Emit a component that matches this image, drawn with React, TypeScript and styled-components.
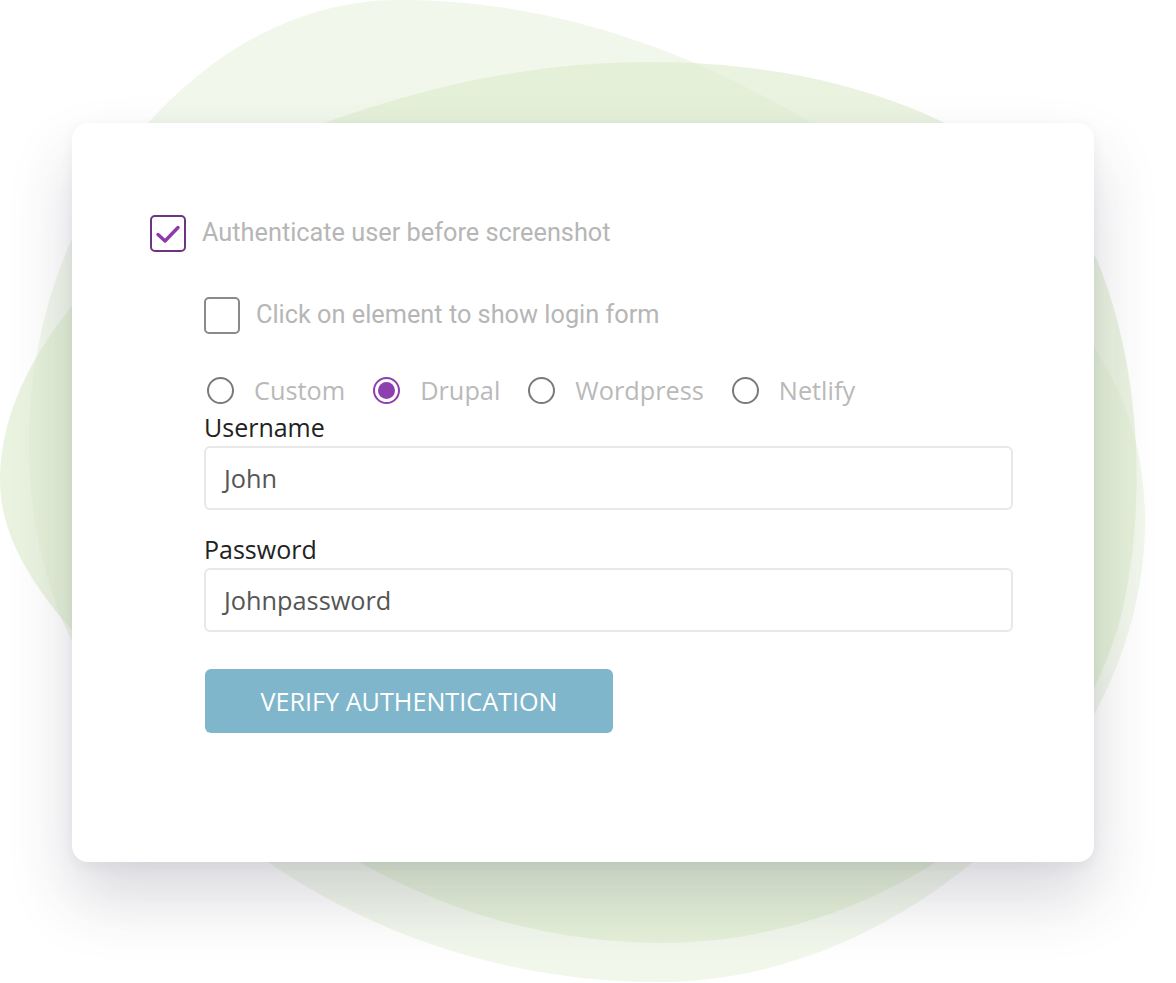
import styled, { createGlobalStyle } from 'styled-components'

const GlobalStyle = createGlobalStyle`
  html, body {
    margin: 0;
    padding: 0;
    background: #ffffff;
  }
  * {
    box-sizing: border-box;
  }
`

const Page = styled.div`
  position: relative;
  width: 1176px;
  height: 983px;
  overflow: hidden;
  padding: 123px 82px 0 72px;
`

const Blobs = styled.svg`
  position: absolute;
  left: 0;
  top: 0;
  width: 1176px;
  height: 983px;
  z-index: 0;
`

const Card = styled.div`
  position: relative;
  z-index: 1;
  width: 1022px;
  height: 739px;
  background: #ffffff;
  border-radius: 16px;
  box-shadow: 0 36px 64px rgba(45, 45, 70, 0.18), 0 4px 14px rgba(45, 45, 70, 0.05);
  padding: 92px 80px 0 78px;
  display: flex;
  flex-direction: column;
`

const CheckRow = styled.label<{ indent?: boolean }>`
  display: flex;
  align-items: center;
  gap: 16px;
  margin-left: ${({ indent }) => (indent ? '54px' : '0')};
  font-family: Roboto, 'Liberation Sans', sans-serif;
  font-size: 25.3px;
  color: #b6b6b6;
  height: 37px;
  line-height: 37px;
  padding-bottom: 2px;
`

const Box = styled.span<{ checked?: boolean }>`
  width: 36px;
  height: 37px;
  border-radius: 5px;
  border: 2px solid ${({ checked }) => (checked ? '#6d3483' : '#8a8a8a')};
  display: flex;
  align-items: center;
  justify-content: center;
  flex-shrink: 0;
  margin-top: 2px;
`

const SubSection = styled.div`
  margin-left: 54px;
  display: flex;
  flex-direction: column;
`

const RadioGroup = styled.div`
  display: flex;
  align-items: center;
  gap: 25px;
  margin-top: 40px;
  height: 32px;
`

const RadioItem = styled.label`
  display: flex;
  align-items: center;
  gap: 20px;
  font-family: 'Open Sans', 'Liberation Sans', sans-serif;
  font-size: 25.3px;
  color: #b9b9b9;
`

const RadioDot = styled.span<{ checked?: boolean }>`
  width: 27px;
  height: 27px;
  border-radius: 50%;
  border: 2px solid ${({ checked }) => (checked ? '#8e3fae' : '#7a7a7a')};
  display: flex;
  align-items: center;
  justify-content: center;
  margin-left: 3px;

  &::after {
    content: '';
    display: ${({ checked }) => (checked ? 'block' : 'none')};
    width: 17px;
    height: 17px;
    border-radius: 50%;
    background: #8e3fae;
  }
`

const Field = styled.div<{ first?: boolean }>`
  display: flex;
  flex-direction: column;
  margin-top: ${({ first }) => (first ? '5px' : '23px')};
`

const FieldLabel = styled.span`
  font-family: 'Open Sans', 'Liberation Sans', sans-serif;
  font-size: 25px;
  line-height: 32px;
  color: #222222;
  margin-bottom: 3px;
`

const Input = styled.div`
  width: 809px;
  height: 64px;
  border: 2px solid #e8e8e8;
  border-radius: 6px;
  display: flex;
  align-items: center;
  padding-left: 18px;
  font-family: 'Open Sans', 'Liberation Sans', sans-serif;
  font-size: 25.3px;
  color: #555555;
`

const Button = styled.button`
  margin-top: 37px;
  width: 408px;
  height: 64px;
  border: none;
  border-radius: 6px;
  background: #80b6cb;
  color: #ffffff;
  font-family: 'Open Sans', 'Liberation Sans', sans-serif;
  font-size: 25.2px;
  text-transform: uppercase;
  cursor: pointer;
  margin-left: 1px;
  padding: 0;
`

const SecondRow = styled.div`
  margin-top: 45px;
`

const radios = [
  { label: 'Custom', checked: false },
  { label: 'Drupal', checked: true },
  { label: 'Wordpress', checked: false },
  { label: 'Netlify', checked: false },
]

export default function App() {
  return (
    <>
      <GlobalStyle />
      <Page>
        <Blobs viewBox="0 0 1176 983">
          <path
            d="M 400 0 C 560 0 700 55 820 128 C 1000 235 1145 330 1145 520 C 1145 770 900 982 660 982 C 380 982 150 820 62 620 C 5 480 22 300 110 170 C 190 60 290 0 400 0 Z"
            fill="#e6f0da"
            opacity="0.55"
          />
          <path
            d="M 650 62 C 880 62 1040 150 1098 262 C 1145 380 1145 520 1120 620 C 1064 820 860 943 662 943 C 420 943 250 800 120 680 C 25 590 0 530 0 480 C 0 340 150 210 280 140 C 400 92 520 62 650 62 Z"
            fill="#dcebcb"
            opacity="0.6"
          />
        </Blobs>
        <Card>
          <CheckRow>
            <Box checked>
              <svg width="26" height="22" viewBox="0 0 26 22">
                <path d="M3 11.5 L10 18 L23 4.5" fill="none" stroke="#8e3aad" strokeWidth="3.4" strokeLinecap="round" strokeLinejoin="round" />
              </svg>
            </Box>
            Authenticate user before screenshot
          </CheckRow>
          <SecondRow>
            <CheckRow indent>
              <Box />
              Click on element to show login form
            </CheckRow>
          </SecondRow>
          <SubSection>
            <RadioGroup>
              {radios.map((r) => (
                <RadioItem key={r.label}>
                  <RadioDot checked={r.checked} />
                  {r.label}
                </RadioItem>
              ))}
            </RadioGroup>
            <Field first>
              <FieldLabel>Username</FieldLabel>
              <Input>John</Input>
            </Field>
            <Field>
              <FieldLabel>Password</FieldLabel>
              <Input>Johnpassword</Input>
            </Field>
            <Button>Verify Authentication</Button>
          </SubSection>
        </Card>
      </Page>
    </>
  )
}
